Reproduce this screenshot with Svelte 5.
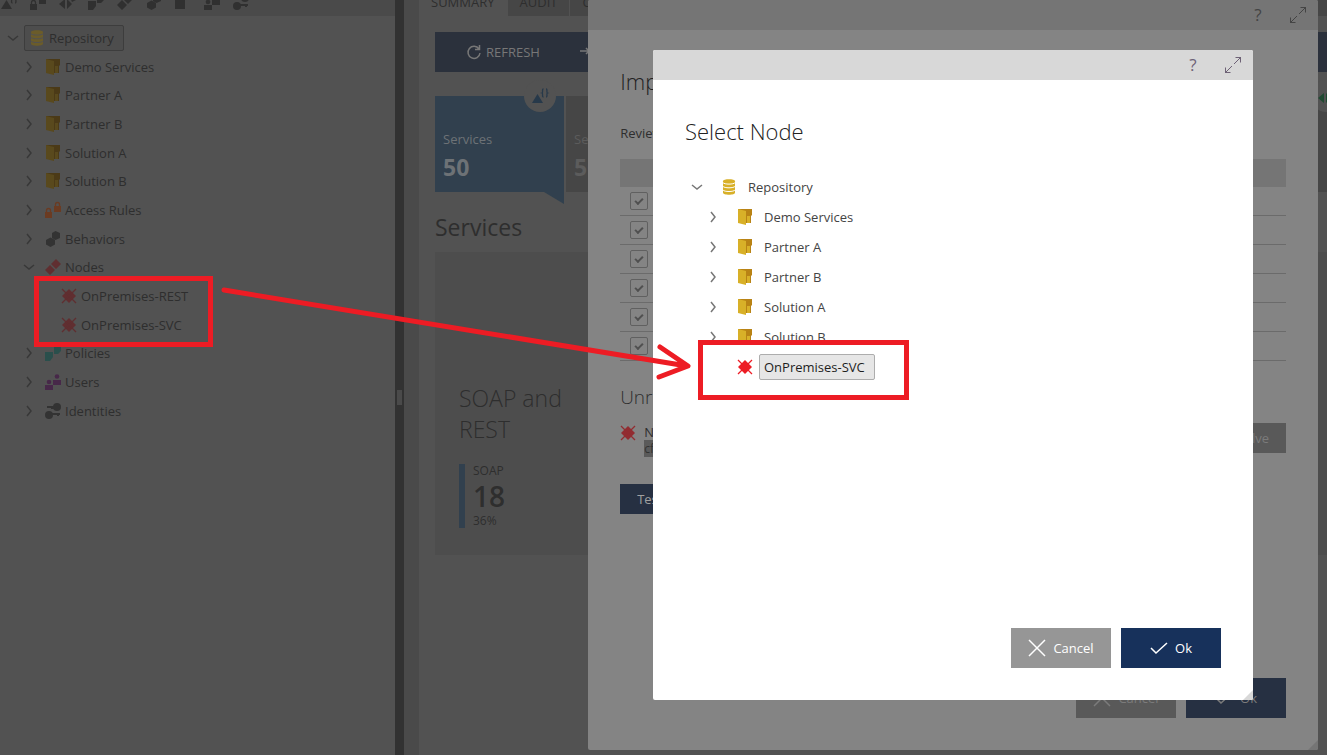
<script lang="ts">
	const toolbar = ['services', 'locks', 'split', 'policies', 'nodes', 'hexes', 'squares', 'users', 'keys'];

	const tree = [
		{ label: 'Demo Services', icon: 'folder', level: 1 },
		{ label: 'Partner A', icon: 'folder', level: 1 },
		{ label: 'Partner B', icon: 'folder', level: 1 },
		{ label: 'Solution A', icon: 'folder', level: 1 },
		{ label: 'Solution B', icon: 'folder', level: 1 },
		{ label: 'Access Rules', icon: 'locks', level: 1 },
		{ label: 'Behaviors', icon: 'hexes', level: 1 },
		{ label: 'Nodes', icon: 'nodes', level: 1, open: true },
		{ label: 'OnPremises-REST', icon: 'node', level: 2 },
		{ label: 'OnPremises-SVC', icon: 'node', level: 2 },
		{ label: 'Policies', icon: 'policies', level: 1 },
		{ label: 'Users', icon: 'users', level: 1 },
		{ label: 'Identities', icon: 'keys', level: 1 }
	];

	const folders = ['Demo Services', 'Partner A', 'Partner B', 'Solution A', 'Solution B'];

	let rows = [true, true, true, true, true, true];
	let selected = 'OnPremises-SVC';
</script>

{#snippet icon(name: string)}
	<svg class="icon icon-{name}" viewBox="0 0 16 16" fill="currentColor" aria-hidden="true">
		{#if name === 'repository'}
			<path d="M2 2.2C2-.4 14-.4 14 2.2V13.8c0 2.6-12 2.6-12 0z" />
			<path class="cut" d="M2 3.6c1 2 11 2 12 0M2 7.3c1 2 11 2 12 0M2 11c1 2 11 2 12 0" />
		{:else if name === 'folder'}
			<path class="back" d="M1 0h14v6l-1 1v7H1z" />
			<path d="M1 0l8 2v14l-8-2z" />
			<path d="M10 7h3v7h-3z" />
		{:else if name === 'locks'}
			<path d="M0 10h7v6H0zM9 4h7v6H9z" />
			<path class="line" d="M1.5 10V8.5a2 2 0 014 0V10M10.500 4V2.500a2 2 0 014 0V4" />
		{:else if name === 'hexes'}
			<path d="M10.500 0L15 2v5l-4.500 2L7 7V2zM5.500 6.500L10 9v4.500L5.500 16 1 13.500V9z" />
		{:else if name === 'nodes'}
			<path d="M11 0l5 5-5 5-5-5zM5 6l5 5-5 5-5-5z" />
		{:else if name === 'node'}
			<path d="M8 1l7 7-7 7-7-7z" />
			<path d="M4 4h8v8H4z" />
			<path class="line" d="M1 1l14 14M15 1L1 15" />
		{:else if name === 'policies'}
			<path d="M0 7h8v5l-3 4H0zM9 1h7v5l-3 3H9z" />
		{:else if name === 'users'}
			<circle cx="4" cy="8" r="2.300" />
			<circle cx="12" cy="2.500" r="2.300" />
			<path d="M0 11h8v5H0zM8 6h8v5H8z" />
		{:else if name === 'keys'}
			<circle cx="12" cy="4" r="4" />
			<circle cx="4" cy="12" r="4" />
			<path d="M2 3h8v3H6V5H2zM6 10h9v2h-1v1h-2v-1H6z" />
		{:else if name === 'services'}
			<path d="M5.500 6L11 15H0z" />
			<path class="line" d="M11.500 1c-2 0 0 3.500-1.500 4 1.500.500-.500 4 1.500 4M14 1c2 0 0 3.500 1.500 4-1.500.500.500 4-1.500 4" />
		{:else if name === 'split'}
			<path d="M6 5v10L0 10zM8 5l5 5-5 5zM10 1l4-1v5l3 1-4 2z" />
		{:else if name === 'squares'}
			<path d="M0 6h10v9H0zM9 1h7v4H9z" />
		{/if}
	</svg>
{/snippet}

{#snippet chevron(open: boolean)}
	<svg class="chevron" viewBox="0 0 12 12" aria-hidden="true">
		<path d={open ? 'M1 4l5 4 5-4' : 'M4 1l4 5-4 5'} />
	</svg>
{/snippet}

{#snippet windowBar()}
	<header class="window-bar">
		<button class="tool" aria-label="Help">?</button>
		<button class="tool" aria-label="Expand">
			<svg viewBox="0 0 16 16" aria-hidden="true">
				<path d="M9 7l7-7M10.500.500h5v5M7 9l-7 7M.500 10.500v5h5" />
			</svg>
		</button>
	</header>
{/snippet}

{#snippet actions()}
	<footer class="actions">
		<button class="btn grey">
			<svg viewBox="0 0 18 18" aria-hidden="true"><path d="M1 1l16 16M17 1L1 17" /></svg>
			Cancel
		</button>
		<button class="btn navy">
			<svg viewBox="0 0 18 18" aria-hidden="true"><path d="M1 9l5 5L17 4" /></svg>
			Ok
		</button>
	</footer>
{/snippet}

<div class="app">
	<aside class="sidebar">
		<div class="toolbar">
			{#each toolbar as name}
				<button class="tool" aria-label={name}>{@render icon(name)}</button>
			{/each}
		</div>
		<ul class="tree">
			<li>
				{@render chevron(true)}
				<button class="node root">{@render icon('repository')}Repository</button>
			</li>
			{#each tree as item}
				<li class="level-{item.level}">
					{#if item.level === 1}{@render chevron(!!item.open)}{/if}
					{@render icon(item.icon)}
					<button class="node">{item.label}</button>
				</li>
			{/each}
		</ul>
	</aside>

	<div class="splitter"><span></span></div>

	<main>
		<nav class="tabs">
			<button class="tab active">SUMMARY</button>
			<button class="tab">AUDIT</button>
			<button class="tab rest">CONTRACTS</button>
		</nav>
		<div class="content">
			<div class="commands">
				<button>
					<svg viewBox="0 0 14 14" aria-hidden="true"><path d="M12 4A6 6 0 1013 8M12.500 0v4.500H8" /></svg>
					REFRESH
				</button>
				<button class="next" aria-label="Next">
					<svg viewBox="0 0 14 14" aria-hidden="true"><path d="M0 6h9M6 3l3 3-3 3" /></svg>
				</button>
			</div>
			<div class="cards">
				<section class="card blue">
					<span class="badge">{@render icon('services')}</span>
					<span>Services</span>
					<strong>50</strong>
				</section>
				<section class="card rest">
					<span class="badge">{@render icon('split')}</span>
					<span>Services</span>
					<strong>50</strong>
				</section>
			</div>
			<h2>Services</h2>
			<section class="panel">
				<h3>SOAP and<br />REST</h3>
				<div class="stat">
					<span>SOAP</span>
					<strong>18</strong>
					<span>36%</span>
				</div>
			</section>
		</div>
	</main>

	<div class="window import" role="dialog" aria-label="Import">
		{@render windowBar()}
		<div class="body">
			<h1>Import</h1>
			<p>Review</p>
			<table>
				<thead><tr><th></th></tr></thead>
				<tbody>
					{#each rows as _, i}
						<tr><td><input type="checkbox" aria-label="Row {i + 1}" bind:checked={rows[i]} /></td></tr>
					{/each}
				</tbody>
			</table>
			<h2>Unresolved</h2>
			<div class="unresolved">
				{@render icon('node')}
				<div class="reason">Node<br /><mark>cf</mark></div>
				<button class="btn grey small">Resolve</button>
			</div>
			<button class="btn navy small">Test</button>
			{@render actions()}
		</div>
	</div>

	<div class="window select" role="dialog" aria-label="Select Node">
		{@render windowBar()}
		<div class="body">
			<h1>Select Node</h1>
			<ul class="tree">
				<li>
					{@render chevron(true)}
					{@render icon('repository')}
					<button class="node">Repository</button>
				</li>
				{#each folders as name}
					<li class="level-1">
						{@render chevron(false)}
						{@render icon('folder')}
						<button class="node" class:selected={selected === name} on:click={() => (selected = name)}>{name}</button>
					</li>
				{/each}
				<li class="level-1 leaf">
					{@render icon('node')}
					<button
						class="node"
						class:selected={selected === 'OnPremises-SVC'}
						on:click={() => (selected = 'OnPremises-SVC')}>OnPremises-SVC</button
					>
				</li>
			</ul>
			{@render actions()}
		</div>
	</div>

	<!-- callouts drawn over the windows -->
	<svg class="callouts" width="1000" height="500" aria-hidden="true">
		<rect x="36.500" y="278.500" width="174" height="66" />
		<rect x="700.500" y="342.500" width="206" height="55" />
		<path d="M224 290L687 366M660 347l28 19-29 11" />
	</svg>
</div>

<style>
	:global(body) {
		margin: 0;
		background: #525252;
	}

	.app {
		position: relative;
		display: flex;
		min-height: 100vh;
		overflow: hidden;
		background: #525252;
		color: #2e2e2e;
		font-family: 'Open Sans', 'Noto Sans', sans-serif;
		font-size: 13px;
		line-height: 20px;
	}

	button {
		margin: 0;
		padding: 0;
		border: 0;
		background: none;
		color: inherit;
		font: inherit;
		white-space: nowrap;
		cursor: pointer;
	}

	h1,
	h2,
	h3,
	p,
	ul {
		margin: 0;
		padding: 0;
		list-style: none;
	}

	h1,
	h2,
	h3 {
		font-weight: 300;
	}

	svg {
		flex: none;
		fill: none;
		stroke: currentColor;
		overflow: visible;
	}

	.icon {
		width: 16px;
		height: 16px;
		fill: currentColor;
		stroke: none;
	}

	.icon .line {
		fill: none;
		stroke: currentColor;
		stroke-width: 1.3;
	}

	.icon .cut {
		fill: none;
		stroke: #525252;
		stroke-width: 1;
	}

	.icon-repository {
		color: #6b5c2a;
	}
	.icon-folder {
		color: #59491d;
	}
	.icon-folder .back {
		fill: #4b3a17;
	}
	.icon-node,
	.icon-nodes {
		color: #602e30;
	}

	.chevron {
		width: 12px;
		height: 12px;
		color: #383838;
		stroke-width: 1.5;
	}

	/* left side */
	.sidebar {
		flex: 0 0 395px;
	}

	.toolbar {
		display: flex;
		align-items: flex-end;
		gap: 11px;
		height: 10px;
		padding-bottom: 6px;
		background: #4a4a4a;
		color: #303030;
	}

	.toolbar .tool {
		display: flex;
	}

	.toolbar .icon {
		width: 18px;
		height: 16px;
	}

	.sidebar .tree {
		padding: 7px;
	}

	.tree li {
		display: flex;
		align-items: center;
	}

	.sidebar li {
		height: 29px;
	}

	.sidebar li:nth-child(3n) {
		height: 28px;
	}

	.sidebar .level-1 {
		padding-left: 16px;
	}
	.sidebar .level-1 .icon {
		margin: 0 4px 0 10px;
	}
	.sidebar .level-2 {
		padding-left: 54px;
	}
	.sidebar .level-2 .icon {
		margin-right: 4px;
	}

	.sidebar .icon-locks {
		color: #6b3b22;
	}
	.sidebar .icon-hexes,
	.sidebar .icon-keys {
		color: #333333;
	}
	.sidebar .icon-policies {
		color: #2a4f4c;
	}
	.sidebar .icon-users {
		color: #472849;
	}

	.sidebar .toolbar .icon {
		color: #303030;
	}

	.sidebar .root {
		display: flex;
		align-items: center;
		gap: 4px;
		margin-left: 5px;
		padding: 2px 9px 2px 4px;
		border: 1px solid #3d3d3d;
		border-radius: 2px;
		background: #4d4d4d;
	}

	.splitter {
		display: flex;
		align-items: center;
		flex: 0 0 9px;
		border-right: 15px solid #4a4a4a;
		background: #323232;
	}

	.splitter span {
		width: 5px;
		height: 15px;
		margin: 40px 0 0 2px;
		background: #4a4a4a;
	}

	/* summary page */
	main {
		flex: 1;
		min-width: 0;
	}

	.tabs {
		display: flex;
		gap: 1px;
		height: 16px;
	}

	.tab {
		display: flex;
		align-items: flex-end;
		padding: 0 12px 4px;
		overflow: hidden;
		background: #464646;
	}

	.tab.active {
		background: none;
	}

	.rest {
		flex: 1;
	}

	.content {
		padding: 16px 0 0 16px;
	}

	.commands {
		display: flex;
		gap: 40px;
		height: 40px;
		padding-left: 32px;
		background: #2b313c;
		color: #777777;
	}

	.commands button {
		display: flex;
		align-items: center;
		gap: 5px;
	}

	.commands svg {
		width: 14px;
		height: 14px;
		stroke-width: 1.5;
	}

	.cards {
		display: flex;
		gap: 2px;
		margin-top: 24px;
	}

	.card {
		position: relative;
		display: flex;
		flex-direction: column;
		gap: 3px;
		height: 63px;
		padding: 33px 8px 0;
		background: #464646;
		color: #5c5c5c;
	}

	.card.blue {
		width: 113px;
		background: #31404e;
		color: #6d7276;
	}

	.card.blue::after {
		content: '';
		position: absolute;
		top: 100%;
		right: 0;
		width: 20px;
		height: 12px;
		background: #31404e;
		clip-path: polygon(0 0, 100% 0, 100% 100%);
	}

	.card strong {
		font-size: 23px;
		font-weight: 700;
		line-height: 30px;
	}

	.badge {
		position: absolute;
		top: -16px;
		right: 8px;
		display: flex;
		align-items: center;
		justify-content: center;
		width: 32px;
		height: 32px;
		border-radius: 50%;
		background: #525252;
		color: #27394a;
	}

	.rest .badge {
		right: -15px;
		color: #204a32;
	}

	.content h2 {
		margin-top: 19px;
		font-size: 23px;
		font-weight: 400;
		line-height: 32px;
	}

	.panel {
		margin-top: 9px;
		padding: 131px 24px 27px;
		background: #4d4d4d;
	}

	.panel h3 {
		font-size: 23px;
		line-height: 31px;
	}

	.stat {
		display: flex;
		flex-direction: column;
		margin-top: 19px;
		padding-left: 8px;
		border-left: 6px solid #31404e;
		font-size: 12px;
		line-height: 14px;
	}

	.stat strong {
		font-size: 28px;
		font-weight: 600;
		line-height: 36px;
	}

	/* windows */
	.window {
		position: absolute;
		display: flex;
		flex-direction: column;
		border-radius: 2px;
		overflow: hidden;
	}

	.window::after {
		content: '';
		position: absolute;
		right: 0;
		bottom: 0;
		width: 10px;
		height: 10px;
		background: var(--bar);
		clip-path: polygon(100% 0, 100% 100%, 0 100%);
	}

	.window.import {
		--bar: #757575;
		top: 0;
		right: 9px;
		bottom: 5px;
		width: 55%;
		background: #848484;
	}

	.window.select {
		--bar: #d8d8d8;
		top: 50px;
		right: 74px;
		bottom: 55px;
		width: 600px;
		background: #ffffff;
		color: #444444;
	}

	.window-bar {
		display: flex;
		align-items: center;
		justify-content: flex-end;
		gap: 24px;
		height: 30px;
		padding: 0 12px;
		background: var(--bar);
	}

	.window-bar .tool {
		display: flex;
		align-items: center;
		justify-content: center;
		min-width: 16px;
		font-size: 17px;
		color: #444444;
	}

	.select .window-bar .tool {
		color: #6e6276;
	}

	.window-bar svg {
		width: 16px;
		height: 16px;
	}

	.body {
		display: flex;
		flex: 1;
		flex-direction: column;
		padding: 35px 32px 32px;
	}

	.window h1 {
		color: #222222;
		font-size: 22px;
		line-height: 32px;
	}

	.import p {
		margin-top: 26px;
	}

	.import table {
		width: 100%;
		margin-top: 16px;
		border-collapse: collapse;
	}

	th {
		height: 28px;
		padding: 0;
		background: #757575;
	}

	td {
		height: 28px;
		padding: 0 0 0 10px;
		border-bottom: 1px solid #6b6b6b;
		line-height: 0;
	}

	td input {
		appearance: none;
		display: grid;
		place-items: center;
		box-sizing: border-box;
		width: 18px;
		height: 18px;
		margin: 0;
		border: 1px solid #606060;
		border-radius: 2px;
	}

	td input:checked::after {
		content: '';
		width: 6px;
		height: 3px;
		margin-bottom: 2px;
		border: solid #505050;
		border-width: 0 0 2px 2px;
		transform: rotate(-45deg);
	}

	.import h2 {
		margin-top: 20px;
		font-size: 19px;
		line-height: 32px;
	}

	.unresolved {
		display: flex;
		align-items: flex-start;
		gap: 8px;
		margin: 10px 0 28px;
		line-height: 16px;
	}

	.unresolved .icon {
		margin-top: 2px;
		color: #922c31;
	}

	.reason {
		margin-top: 1px;
	}

	mark {
		background: #5a5a5a;
		color: #333333;
		font-size: 12px;
		line-height: 12px;
	}

	.unresolved .btn {
		margin-left: auto;
	}

	.btn {
		display: flex;
		align-items: center;
		justify-content: center;
		gap: 7px;
		width: 100px;
		height: 40px;
		color: #ffffff;
	}

	.btn svg {
		width: 18px;
		height: 18px;
		stroke-width: 1.5;
	}

	.btn.small {
		width: auto;
		height: 30px;
		padding: 0 17px;
	}

	.btn.small.navy {
		align-self: flex-start;
	}

	.grey {
		background: #969696;
	}
	.navy {
		background: #17315b;
	}
	.import .grey {
		background: #595959;
		color: #7b7b7b;
	}
	.import .navy {
		background: #263042;
		color: #7b7b7b;
	}
	.import .navy.small {
		color: #a0a0a0;
	}

	.actions {
		display: flex;
		justify-content: flex-end;
		gap: 10px;
		margin-top: auto;
	}

	.select .tree {
		margin-top: 25px;
	}

	.select li {
		height: 30px;
		padding-left: 6px;
	}

	.select .level-1 {
		padding-left: 22px;
	}

	.select .leaf {
		padding-left: 52px;
	}

	.select .chevron {
		margin-right: 18px;
		color: #777777;
	}

	.select .icon {
		margin-right: 6px;
	}

	.select .node {
		padding: 2px 4px;
		border: 1px solid transparent;
		border-radius: 2px;
	}

	.select .node.selected {
		padding-right: 9px;
		border-color: #adadad;
		background: #e6e6e6;
		color: #1e1e1e;
	}

	.select .icon-repository,
	.select .icon-folder {
		color: #d8b028;
	}
	.select .icon-folder .back {
		fill: #b98315;
	}
	.select .icon .cut {
		stroke: #ffffff;
	}
	.select .icon-node {
		color: #ed1c24;
	}

	.callouts {
		position: absolute;
		top: 0;
		left: 0;
		stroke: #ed1c24;
		stroke-width: 5;
		pointer-events: none;
	}

	.callouts path {
		stroke-linecap: round;
		stroke-linejoin: round;
	}
</style>
